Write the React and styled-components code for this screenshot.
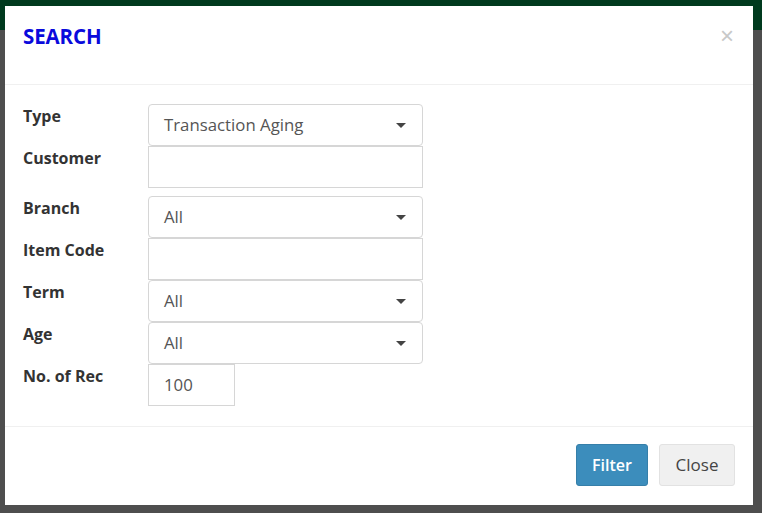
import React from "react";
import styled, { createGlobalStyle } from "styled-components";

const GlobalStyle = createGlobalStyle`
  html, body { margin: 0; padding: 0; }
  body {
    background: linear-gradient(#003a1e 0, #003a1e 30px, #4e4e4e 30px);
    min-height: 513px;
    font-family: "Open Sans", "Noto Sans", sans-serif;
  }
  * { box-sizing: border-box; }
`;

const Page = styled.div`
  width: 762px;
  height: 513px;
  padding: 6px 9px 8px 5px;
`;

const Modal = styled.div`
  background: #fff;
  height: 499px;
  display: flex;
  flex-direction: column;
`;

const Header = styled.div`
  height: 79px;
  display: flex;
  align-items: center;
  justify-content: space-between;
  padding: 0 18px 18px 18px;
  border-bottom: 1px solid #f0f0f0;
`;

const Title = styled.h4`
  margin: 0;
  color: #0a0adc;
  font-size: 20.5px;
  font-weight: 700;
  letter-spacing: -0.1px;
`;

const CloseX = styled.button`
  border: 0;
  background: none;
  color: #c8c8c8;
  font-size: 24px;
  line-height: 1;
  padding: 0;
  margin-right: 1px;
  cursor: pointer;
  font-family: "Liberation Sans", sans-serif;
`;

const Body = styled.div`
  padding: 19px 18px 20px 18px;
  display: flex;
  flex-direction: column;
  border-bottom: 1px solid #f0f0f0;
`;

const Row = styled.div`
  display: grid;
  grid-template-columns: 125px 275px;
  height: 42px;
  margin-bottom: ${({ gap }) => gap || 0}px;
`;

const Label = styled.label`
  font-weight: 700;
  font-size: 16px;
  color: #333;
  padding-top: 1px;
`;

const Field = styled.div`
  position: relative;
  width: ${({ w }) => w || 275}px;
  height: 42px;
  border: 1px solid #d6d6d6;
  border-radius: ${({ select }) => (select ? 4 : 0)}px;
  padding: 0 15px 2px;
  display: flex;
  align-items: center;
  font-size: 16.8px;
  color: #555;
`;

const Caret = styled.span`
  position: absolute;
  right: 16px;
  top: 18px;
  width: 0;
  height: 0;
  border-left: 5px solid transparent;
  border-right: 5px solid transparent;
  border-top: 5px solid #444;
`;

const Footer = styled.div`
  flex: 1;
  display: flex;
  justify-content: flex-end;
  align-items: flex-start;
  gap: 11px;
  padding: 17px 18px 0 0;
`;

const Button = styled.button`
  height: 42px;
  width: ${({ primary }) => (primary ? 72 : 76)}px;
  padding: 0 0 1px;
  font-size: ${({ primary }) => (primary ? 16 : 17)}px;
  font-family: inherit;
  border-radius: 3px;
  border: 1px solid ${({ primary }) => (primary ? "#367fa9" : "#e2e2e2")};
  background: ${({ primary }) => (primary ? "#3c8dbc" : "#f0f0f0")};
  color: ${({ primary }) => (primary ? "#fff" : "#444")};
  font-weight: ${({ primary }) => (primary ? 600 : 400)};
  cursor: pointer;
`;

const rows = [
  { label: "Type", value: "Transaction Aging", select: true },
  { label: "Customer", value: "", gap: 8 },
  { label: "Branch", value: "All", select: true },
  { label: "Item Code", value: "" },
  { label: "Term", value: "All", select: true },
  { label: "Age", value: "All", select: true },
  { label: "No. of Rec", value: "100", w: 87 },
];

export default function App() {
  return (
    <>
      <GlobalStyle />
      <Page>
        <Modal>
          <Header>
            <Title>SEARCH</Title>
            <CloseX>×</CloseX>
          </Header>
          <Body>
            {rows.map((r) => (
              <Row key={r.label} gap={r.gap}>
                <Label>{r.label}</Label>
                <Field select={r.select} w={r.w}>
                  {r.value}
                  {r.select && <Caret />}
                </Field>
              </Row>
            ))}
          </Body>
          <Footer>
            <Button primary>Filter</Button>
            <Button>Close</Button>
          </Footer>
        </Modal>
      </Page>
    </>
  );
}
